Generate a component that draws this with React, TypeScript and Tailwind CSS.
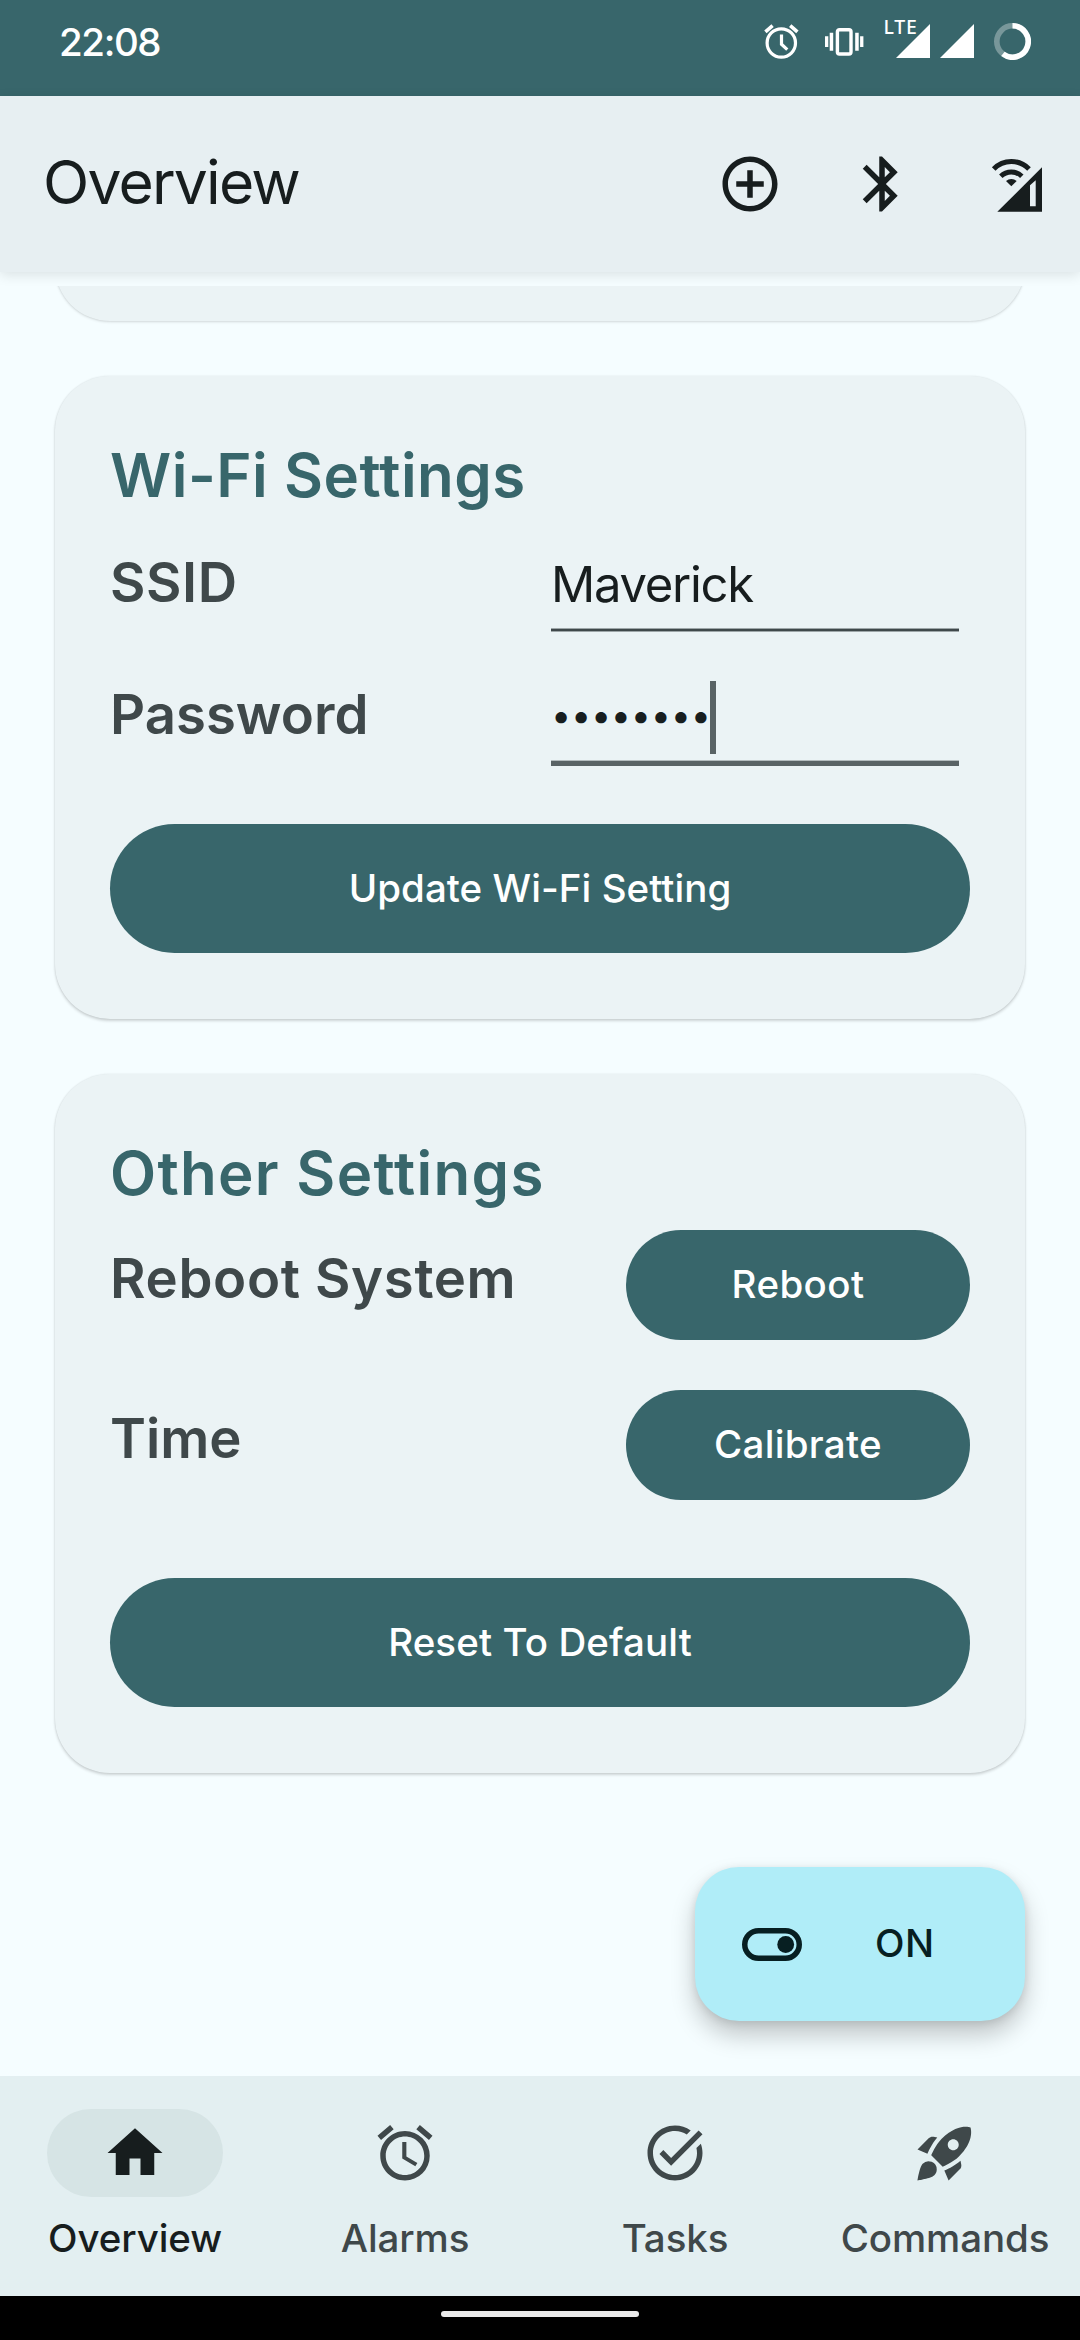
import type { ReactNode } from "react";
import { MdAddCircleOutline, MdAlarm, MdBluetooth, MdHome, MdRocketLaunch, MdTaskAlt } from "react-icons/md";

function StatusBar() {
  return (
    <header className="flex h-24 shrink-0 bg-[#38666b] pl-[59px] pr-[49px] text-white">
      <span className="mt-[17px] text-[38.5px] font-medium leading-[50px] tracking-[-1.4px]">22:08</span>
      <div className="ml-auto flex items-start">
        <svg className="mr-[22px] mt-[22px] h-[38px] w-[40px]" viewBox="0 0 40 38" fill="none" stroke="currentColor">
          <circle cx="19.3" cy="21" r="14.2" strokeWidth="3.2" />
          <path d="M19.5 12.5v9.7l5.8 5.4" strokeWidth="3.2" />
          <path d="M3.4 9.8 10.6 3.6M28.2 3.6l7.2 6.2" strokeWidth="3.6" />
        </svg>
        <svg className="mr-5 mt-[27px] h-[30px] w-[41px]" viewBox="0 0 41 30" fill="currentColor">
          <rect x="13.4" y="2.7" width="13.6" height="24.3" rx="2" fill="none" stroke="currentColor" strokeWidth="3.4" />
          <path d="M1 9.3h3.3V20H1zM5.7 5.7h3.5v18H5.7zM31.2 5.7h3.5v18h-3.5zM36.1 9.3h3.3V20h-3.3z" />
        </svg>
        <div className="relative mr-[10px] h-[58px] w-[45px]">
          <span
            className="absolute left-[-1.5px] top-[15px] text-[19.5px] font-medium leading-6 tracking-[0.8px]"
            style={{ fontFamily: '"Noto Sans", sans-serif' }}
          >
            LTE
          </span>
          <svg className="absolute bottom-0 right-0 h-[34px] w-[34px]" viewBox="0 0 34 34" fill="currentColor">
            <path d="M34 0v34H0z" />
          </svg>
        </div>
        <svg className="mr-5 mt-6 h-[34px] w-[34px]" viewBox="0 0 34 34" fill="currentColor">
          <path d="M34 0v34H0z" />
        </svg>
        <svg className="mt-[23px] h-[37px] w-[37px]" viewBox="0 0 37 37" fill="none" stroke="white" strokeWidth="5.6">
          <circle cx="18.5" cy="18.5" r="15.7" strokeOpacity="0.32" />
          <path d="M18.5 2.8a15.7 15.7 0 1 1-9.6 28.1" />
        </svg>
      </div>
    </header>
  );
}

function WifiCellIcon() {
  return (
    <svg className="size-[66px]" viewBox="0 0 66 66" fill="none" stroke="currentColor" strokeWidth="5">
      <path d="M12.7 18a24.5 24.5 0 0 1 35.3 0" />
      <path d="M19.8 25.2a15.2 15.2 0 0 1 21 0" />
      <path d="M25 30a8.4 8.4 0 0 1 10.7 0l-5.4 5.3z" fill="currentColor" stroke="none" />
      <path d="M16.3 60.7 61 16.3v44.4zM49 34.3v20.9h5.7V29.2z" fill="currentColor" fillRule="evenodd" stroke="none" />
    </svg>
  );
}

function AppBar() {
  return (
    <div className="flex h-44 shrink-0 items-center bg-[#e7eff2] pl-[43px] pr-[33px] text-[#171d1e] shadow-[0_3px_12px_rgba(0,0,0,0.11)]">
      <h1 className="-mt-1 text-[60.5px] font-normal leading-[72px] tracking-[-1.8px]">Overview</h1>
      <div className="ml-auto flex gap-[66px]">
        <MdAddCircleOutline className="size-[66px]" />
        <MdBluetooth className="size-[66px]" />
        <WifiCellIcon />
      </div>
    </div>
  );
}

function Card({ title, tracking, children }: { title: string; tracking: string; children: ReactNode }) {
  return (
    <section className="flex shrink-0 flex-col rounded-[55px] bg-[#ebf3f5] px-[55px] pb-[66px] pt-[64px] shadow-[0_2px_3px_rgba(0,0,0,0.16),0_0_2px_rgba(0,0,0,0.1)]">
      <h2 className={`text-[60px] font-semibold leading-[70px] text-[#38666b] ${tracking}`}>{title}</h2>
      {children}
    </section>
  );
}

const labelClass = "text-[54.5px] font-semibold text-[#3f484a]";
const buttonClass = "flex items-center justify-center rounded-full bg-[#38666b] text-[38.5px] font-medium text-white";

function WifiCard() {
  return (
    <Card title="Wi-Fi Settings" tracking="tracking-[0.5px]">
      <div className="mt-[6px] flex h-[132px] justify-between">
        <span className={`${labelClass} leading-[132px] tracking-[0.6px]`}>SSID</span>
        <div className="mr-[11px] flex w-[408px] flex-col pt-[38px] text-[#171d1e]">
          <span className="h-[74px] text-[49px] font-normal leading-[61px] tracking-[-1.3px]">Maverick</span>
          <div className="h-1 border-y border-[#9da6a8] bg-[#3f484a]" />
        </div>
      </div>
      <div className="flex h-[132px] justify-between">
        <span className={`${labelClass} leading-[132px]`}>Password</span>
        <div className="mr-[11px] flex w-[408px] flex-col pt-[33px] text-[#171d1e]">
          <div className="flex h-[79px] items-start">
            <span className="w-[159px] text-[36px] leading-[69px] tracking-[-0.3px]">••••••••</span>
            <div className="h-[73px] w-[6px] bg-[#596365]" />
          </div>
          <div className="h-[6px] border-t border-[#b4bcbe] bg-[#596365]" />
        </div>
      </div>
      <button className={`${buttonClass} mt-11 h-[129px] tracking-[0.05px]`}>Update Wi-Fi Setting</button>
    </Card>
  );
}

function OtherCard() {
  return (
    <Card title="Other Settings" tracking="tracking-[1.3px]">
      <div className="mt-[22px] flex flex-col gap-[50px]">
        <div className="flex h-[110px] justify-between">
          <span className={`${labelClass} leading-[96px] tracking-[0.65px]`}>Reboot System</span>
          <button className={`${buttonClass} w-[344px] tracking-[0.4px]`}>Reboot</button>
        </div>
        <div className="flex h-[110px] justify-between">
          <span className={`${labelClass} leading-[96px]`}>Time</span>
          <button className={`${buttonClass} w-[344px] tracking-[0.3px]`}>Calibrate</button>
        </div>
      </div>
      <button className={`${buttonClass} mt-[78px] h-[129px] tracking-[0.1px]`}>Reset To Default</button>
    </Card>
  );
}

function PowerFab() {
  return (
    <button className="absolute bottom-[55px] right-[55px] flex h-[154px] w-[330px] items-center rounded-[44px] bg-[#b0edf8] pl-[47px] text-[#071f22] shadow-[0_14px_24px_rgba(0,0,0,0.22),0_2px_8px_rgba(0,0,0,0.1)]">
      <svg className="h-[33px] w-[60px]" viewBox="0 0 60 33" fill="none">
        <rect x="2.75" y="2.75" width="54.5" height="27.5" rx="13.75" stroke="currentColor" strokeWidth="5.5" />
        <circle cx="43.7" cy="16.5" r="8.4" fill="currentColor" />
      </svg>
      <span className="-mt-[3px] ml-[73px] text-[38.5px] font-medium leading-[48px] tracking-[0.5px]">ON</span>
    </button>
  );
}

const tabs = [
  { label: "Overview", Icon: MdHome, active: true },
  { label: "Alarms", Icon: MdAlarm, active: false },
  { label: "Tasks", Icon: MdTaskAlt, active: false },
  { label: "Commands", Icon: MdRocketLaunch, active: false },
];

function BottomNav() {
  return (
    <nav className="grid h-[220px] shrink-0 grid-cols-4 bg-[#e3eff1] pt-[33px]">
      {tabs.map(({ label, Icon, active }) => (
        <div key={label} className={`flex flex-col items-center ${active ? "text-[#171d1e]" : "text-[#3f484a]"}`}>
          <div className={`flex h-[88px] w-[176px] items-center justify-center rounded-full ${active ? "bg-[#d6e4e5]" : ""}`}>
            <Icon className="size-[66px]" />
          </div>
          <span className="mt-[21px] text-[38.5px] font-medium leading-[40px] tracking-[-0.1px]">{label}</span>
        </div>
      ))}
    </nav>
  );
}

export default function App() {
  return (
    <div
      className="flex h-[2340px] w-[1080px] flex-col overflow-hidden bg-[#f5fdff]"
      style={{ fontFamily: 'Inter, "Liberation Sans", sans-serif' }}
    >
      <StatusBar />
      <AppBar />
      <main className="relative mt-[14px] flex h-[1790px] shrink-0 flex-col gap-[55px] overflow-hidden px-[55px]">
        <div className="-mt-[100px] h-[135px] shrink-0 rounded-[55px] bg-[#ebf3f5] shadow-[0_1px_3px_rgba(0,0,0,0.12),0_0_2px_rgba(0,0,0,0.1)]" />
        <WifiCard />
        <OtherCard />
        <PowerFab />
      </main>
      <BottomNav />
      <footer className="flex h-11 shrink-0 justify-center bg-black pt-[15px]">
        <div className="h-[6px] w-[198px] rounded-full bg-[#ebebeb]" />
      </footer>
    </div>
  );
}
